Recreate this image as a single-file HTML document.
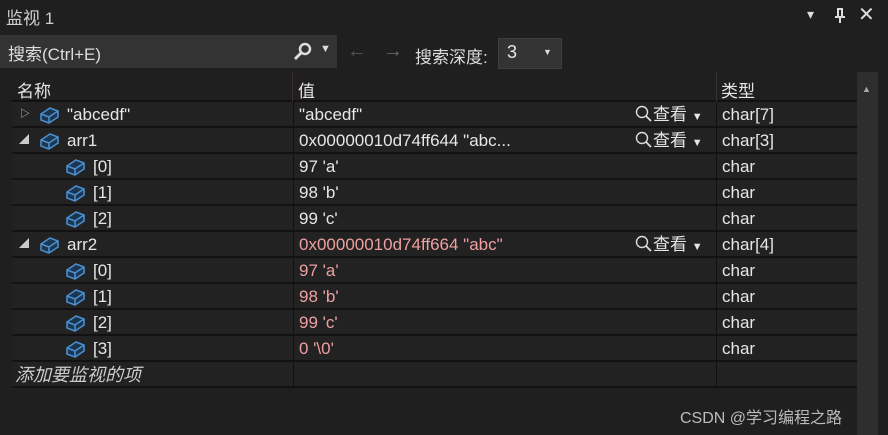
<!DOCTYPE html><html><head><meta charset="utf-8"><style>
*{margin:0;padding:0;box-sizing:border-box}
body{width:888px;height:435px;background:#1f1f1f;color:#e6e6e6;font-family:"Liberation Sans","Noto Sans CJK SC",sans-serif;font-size:17px;position:relative;overflow:hidden}
.a{position:absolute;white-space:nowrap}
.row{position:absolute;left:12px;width:845px;height:26px;background:#222222;border-bottom:2px solid #121212;overflow:hidden}
.c{position:absolute;top:1px;height:24px;line-height:24px;white-space:nowrap}
.v{left:281px;border-left:1px solid #101010;padding-left:5px;width:423px;top:0;height:24px;line-height:26px}
.t{left:704px;border-left:1px solid #101010;padding-left:5px;top:0;height:24px;line-height:26px}
.red{color:#eea0a0}
.vw{position:absolute;left:341px;top:0;line-height:26px}
.vw svg{vertical-align:-3px}
</style></head><body>
<div class="a" style="left:6px;top:4px;font-size:17px;color:#cfcfcf">监视 1</div>
<div class="a" style="left:807px;top:6px;font-size:14px;color:#ddd">▾</div>
<svg class="a" style="left:833px;top:8px" width="14" height="16"><path d="M4 1h6M5 1v8M9 1v8M2 9h10M7 9v6" stroke="#ddd" stroke-width="2" fill="none"/></svg>
<div class="a" style="left:858px;top:2px;font-size:20px;color:#ddd">✕</div>
<div class="a" style="left:0;top:35px;width:337px;height:33px;background:#333333"></div>
<div class="a" style="left:8px;top:40px;font-size:17px;color:#ddd">搜索(Ctrl+E)</div>
<svg class="a" style="left:293px;top:42px" width="20" height="20"><circle cx="12" cy="7" r="5" stroke="#ddd" stroke-width="2.5" fill="none"/><path d="M8 11L2 17" stroke="#ddd" stroke-width="3"/></svg>
<div class="a" style="left:320px;top:43px;font-size:11px;color:#ddd">▼</div>
<div class="a" style="left:347px;top:40px;font-size:20px;color:#555">←</div>
<div class="a" style="left:383px;top:40px;font-size:20px;color:#666">→</div>
<div class="a" style="left:415px;top:43px;color:#ddd">搜索深度:</div>
<div class="a" style="left:498px;top:38px;width:64px;height:31px;background:#333;border:1px solid #3d3d3d"></div>
<div class="a" style="left:507px;top:42px;font-size:18px">3</div>
<div class="a" style="left:543px;top:47px;font-size:9px;color:#ddd">▼</div>
<div class="a" style="left:12px;top:72px;width:845px;height:30px;background:#1f1f1f;border-bottom:2px solid #111"></div>
<div class="a" style="left:292px;top:72px;width:1px;height:30px;background:#3a2a2a"></div>
<div class="a" style="left:716px;top:72px;width:1px;height:30px;background:#333"></div>
<div class="a" style="left:17px;top:77px;font-size:17px">名称</div>
<div class="a" style="left:298px;top:77px;font-size:17px">值</div>
<div class="a" style="left:721px;top:77px;font-size:17px">类型</div>
<div class="a" style="left:857px;top:72px;width:21px;height:363px;background:#2e2e2e"></div>
<div class="a" style="left:862px;top:84px;font-size:9px;color:#aaa">▲</div>
<svg width="0" height="0" style="position:absolute"><defs><g id="ic"><path d="M2 9L11 3L19 6L19 12L10 18L2 15Z" fill="#1c3550" stroke="#4a8fd0" stroke-width="1.6"/><path d="M2 9L10 12L19 6M10 12L10 18" stroke="#4a8fd0" stroke-width="1.6" fill="none"/></g>
<g id="mg"><circle cx="7" cy="7" r="5.5" stroke="#ddd" stroke-width="1.4" fill="none"/><path d="M11 11L16 16" stroke="#ddd" stroke-width="1.8"/></g></defs></svg>

<div class="row" style="top:102px"><div class="c" style="left:8px;font-size:10px;color:#ccc">▷</div><svg class="c" style="left:27px;top:3px" width="22" height="20"><use href="#ic"/></svg><div class="c" style="left:55px">"abcedf"</div><div class="c v">"abcedf"<div class="vw"><svg width="18" height="18"><use href="#mg"/></svg>查看 <span style="font-size:11px">▼</span></div></div><div class="c t">char[7]</div></div>
<div class="row" style="top:128px"><div class="c" style="left:7px;font-size:10px;color:#ccc">◢</div><svg class="c" style="left:27px;top:3px" width="22" height="20"><use href="#ic"/></svg><div class="c" style="left:55px">arr1</div><div class="c v">0x00000010d74ff644 "abc...<div class="vw"><svg width="18" height="18"><use href="#mg"/></svg>查看 <span style="font-size:11px">▼</span></div></div><div class="c t">char[3]</div></div>
<div class="row" style="top:154px"><svg class="c" style="left:53px;top:3px" width="22" height="20"><use href="#ic"/></svg><div class="c" style="left:81px">[0]</div><div class="c v">97 'a'</div><div class="c t">char</div></div>
<div class="row" style="top:180px"><svg class="c" style="left:53px;top:3px" width="22" height="20"><use href="#ic"/></svg><div class="c" style="left:81px">[1]</div><div class="c v">98 'b'</div><div class="c t">char</div></div>
<div class="row" style="top:206px"><svg class="c" style="left:53px;top:3px" width="22" height="20"><use href="#ic"/></svg><div class="c" style="left:81px">[2]</div><div class="c v">99 'c'</div><div class="c t">char</div></div>
<div class="row" style="top:232px"><div class="c" style="left:7px;font-size:10px;color:#ccc">◢</div><svg class="c" style="left:27px;top:3px" width="22" height="20"><use href="#ic"/></svg><div class="c" style="left:55px">arr2</div><div class="c v"><span class="red">0x00000010d74ff664 "abc"</span><div class="vw"><svg width="18" height="18"><use href="#mg"/></svg>查看 <span style="font-size:11px">▼</span></div></div><div class="c t">char[4]</div></div>
<div class="row" style="top:258px"><svg class="c" style="left:53px;top:3px" width="22" height="20"><use href="#ic"/></svg><div class="c" style="left:81px">[0]</div><div class="c v red">97 'a'</div><div class="c t">char</div></div>
<div class="row" style="top:284px"><svg class="c" style="left:53px;top:3px" width="22" height="20"><use href="#ic"/></svg><div class="c" style="left:81px">[1]</div><div class="c v red">98 'b'</div><div class="c t">char</div></div>
<div class="row" style="top:310px"><svg class="c" style="left:53px;top:3px" width="22" height="20"><use href="#ic"/></svg><div class="c" style="left:81px">[2]</div><div class="c v red">99 'c'</div><div class="c t">char</div></div>
<div class="row" style="top:336px"><svg class="c" style="left:53px;top:3px" width="22" height="20"><use href="#ic"/></svg><div class="c" style="left:81px">[3]</div><div class="c v red">0 '\0'</div><div class="c t">char</div></div>
<div class="row" style="top:362px"><div class="c" style="left:3px;font-style:italic;color:#ccc;font-size:18px">添加要监视的项</div><div class="c v"></div><div class="c t"></div></div>
<div class="a" style="left:680px;top:404px;font-size:16px;color:#bbb">CSDN @学习编程之路</div>
</body></html>
